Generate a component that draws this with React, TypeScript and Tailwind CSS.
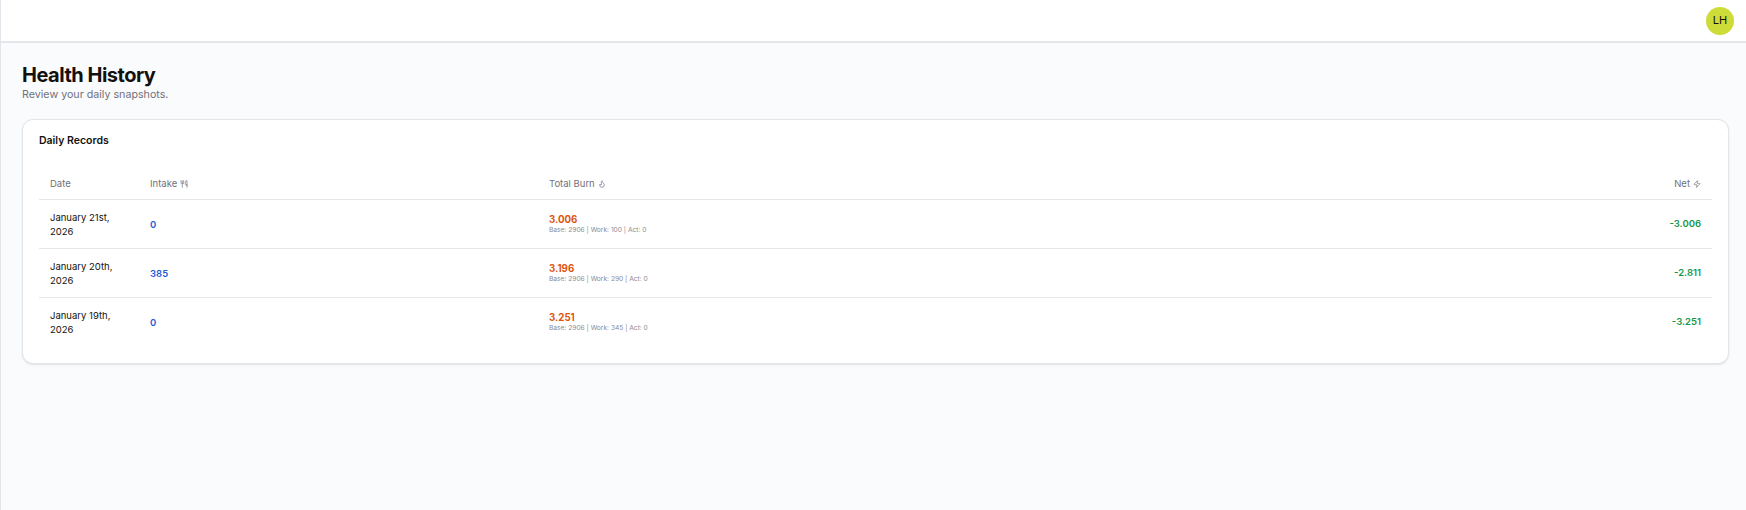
import React from "react";
import { Flame, Utensils, Zap } from "lucide-react";

const records = [
  { date: "January 21st, 2026", intake: "0", burn: "3.006", work: "100", net: "-3.006" },
  { date: "January 20th, 2026", intake: "385", burn: "3.196", work: "290", net: "-2.811" },
  { date: "January 19th, 2026", intake: "0", burn: "3.251", work: "345", net: "-3.251" },
];

const App: React.FC = () => {
  return (
    <div className="h-[510px] overflow-hidden border-l border-[#e2e5ea] bg-[#fafbfd] font-['Inter',sans-serif] text-[#14110d]">
      <header className="flex h-[43px] items-center justify-end border-b-2 border-[#e4e6ea] bg-white pr-[12px]">
        <div className="flex h-[28px] w-[28px] items-center justify-center rounded-full bg-[#cddc39] text-[11px]">
          LH
        </div>
      </header>
      <main className="pl-[21px] pr-[17px] pt-[20px]">
        <h1 className="text-[20px] leading-[25px] font-bold tracking-[-0.5px]">Health History</h1>
        <p className="text-[10.7px] leading-[13px] text-[#71717a]">Review your daily snapshots.</p>
        <section className="mt-[18px] rounded-[11px] border border-[#e2e5ea] bg-white px-[16px] pt-[14px] pb-[17px] shadow-[0_1px_2px_rgba(0,0,0,0.1)]">
          <h2 className="text-[10.5px] leading-[14px] font-semibold">Daily Records</h2>
          <table className="mt-[19px] w-full table-fixed text-[9.5px]">
            <thead>
              <tr className="h-[32px] border-b border-[#e4e6ea] text-left text-[#71717a]">
                <th className="w-[100px] pl-[11px] pt-[2px] font-normal">Date</th>
                <th className="w-[399px] pl-[11px] pt-[2px] font-normal">
                  <span className="flex items-center gap-[3px]">
                    Intake <Utensils size={8} />
                  </span>
                </th>
                <th className="pl-[11px] pt-[2px] font-normal">
                  <span className="flex items-center gap-[3px]">
                    Total Burn <Flame size={8} />
                  </span>
                </th>
                <th className="w-[200px] pr-[11px] pt-[2px] font-normal">
                  <span className="flex items-center justify-end gap-[3px]">
                    Net <Zap size={8} />
                  </span>
                </th>
              </tr>
            </thead>
            <tbody>
              {records.map((item, index) => (
                <tr
                  key={item.date}
                  className={index < records.length - 1 ? "h-[49px] border-b border-[#e4e6ea]" : "h-[49px]"}
                >
                  <td className="pl-[11px] pr-[11px] pt-[2px] leading-[13.5px]">{item.date}</td>
                  <td className="pl-[11px] pt-[3px] font-semibold text-[#1f5bd8]">{item.intake}</td>
                  <td className="pl-[11px] pt-[2px]">
                    <div className="text-[9.7px] leading-[11px] font-bold text-[#dd5510]">{item.burn}</div>
                    <div className="mt-[1px] text-[6.65px] leading-[9px] text-[#8b8b93]">
                      Base: 2906 | Work: {item.work} | Act: 0
                    </div>
                  </td>
                  <td className="pr-[11px] pt-[1px] text-right font-semibold text-[#16984a]">{item.net}</td>
                </tr>
              ))}
            </tbody>
          </table>
        </section>
      </main>
    </div>
  );
};

export default App;
